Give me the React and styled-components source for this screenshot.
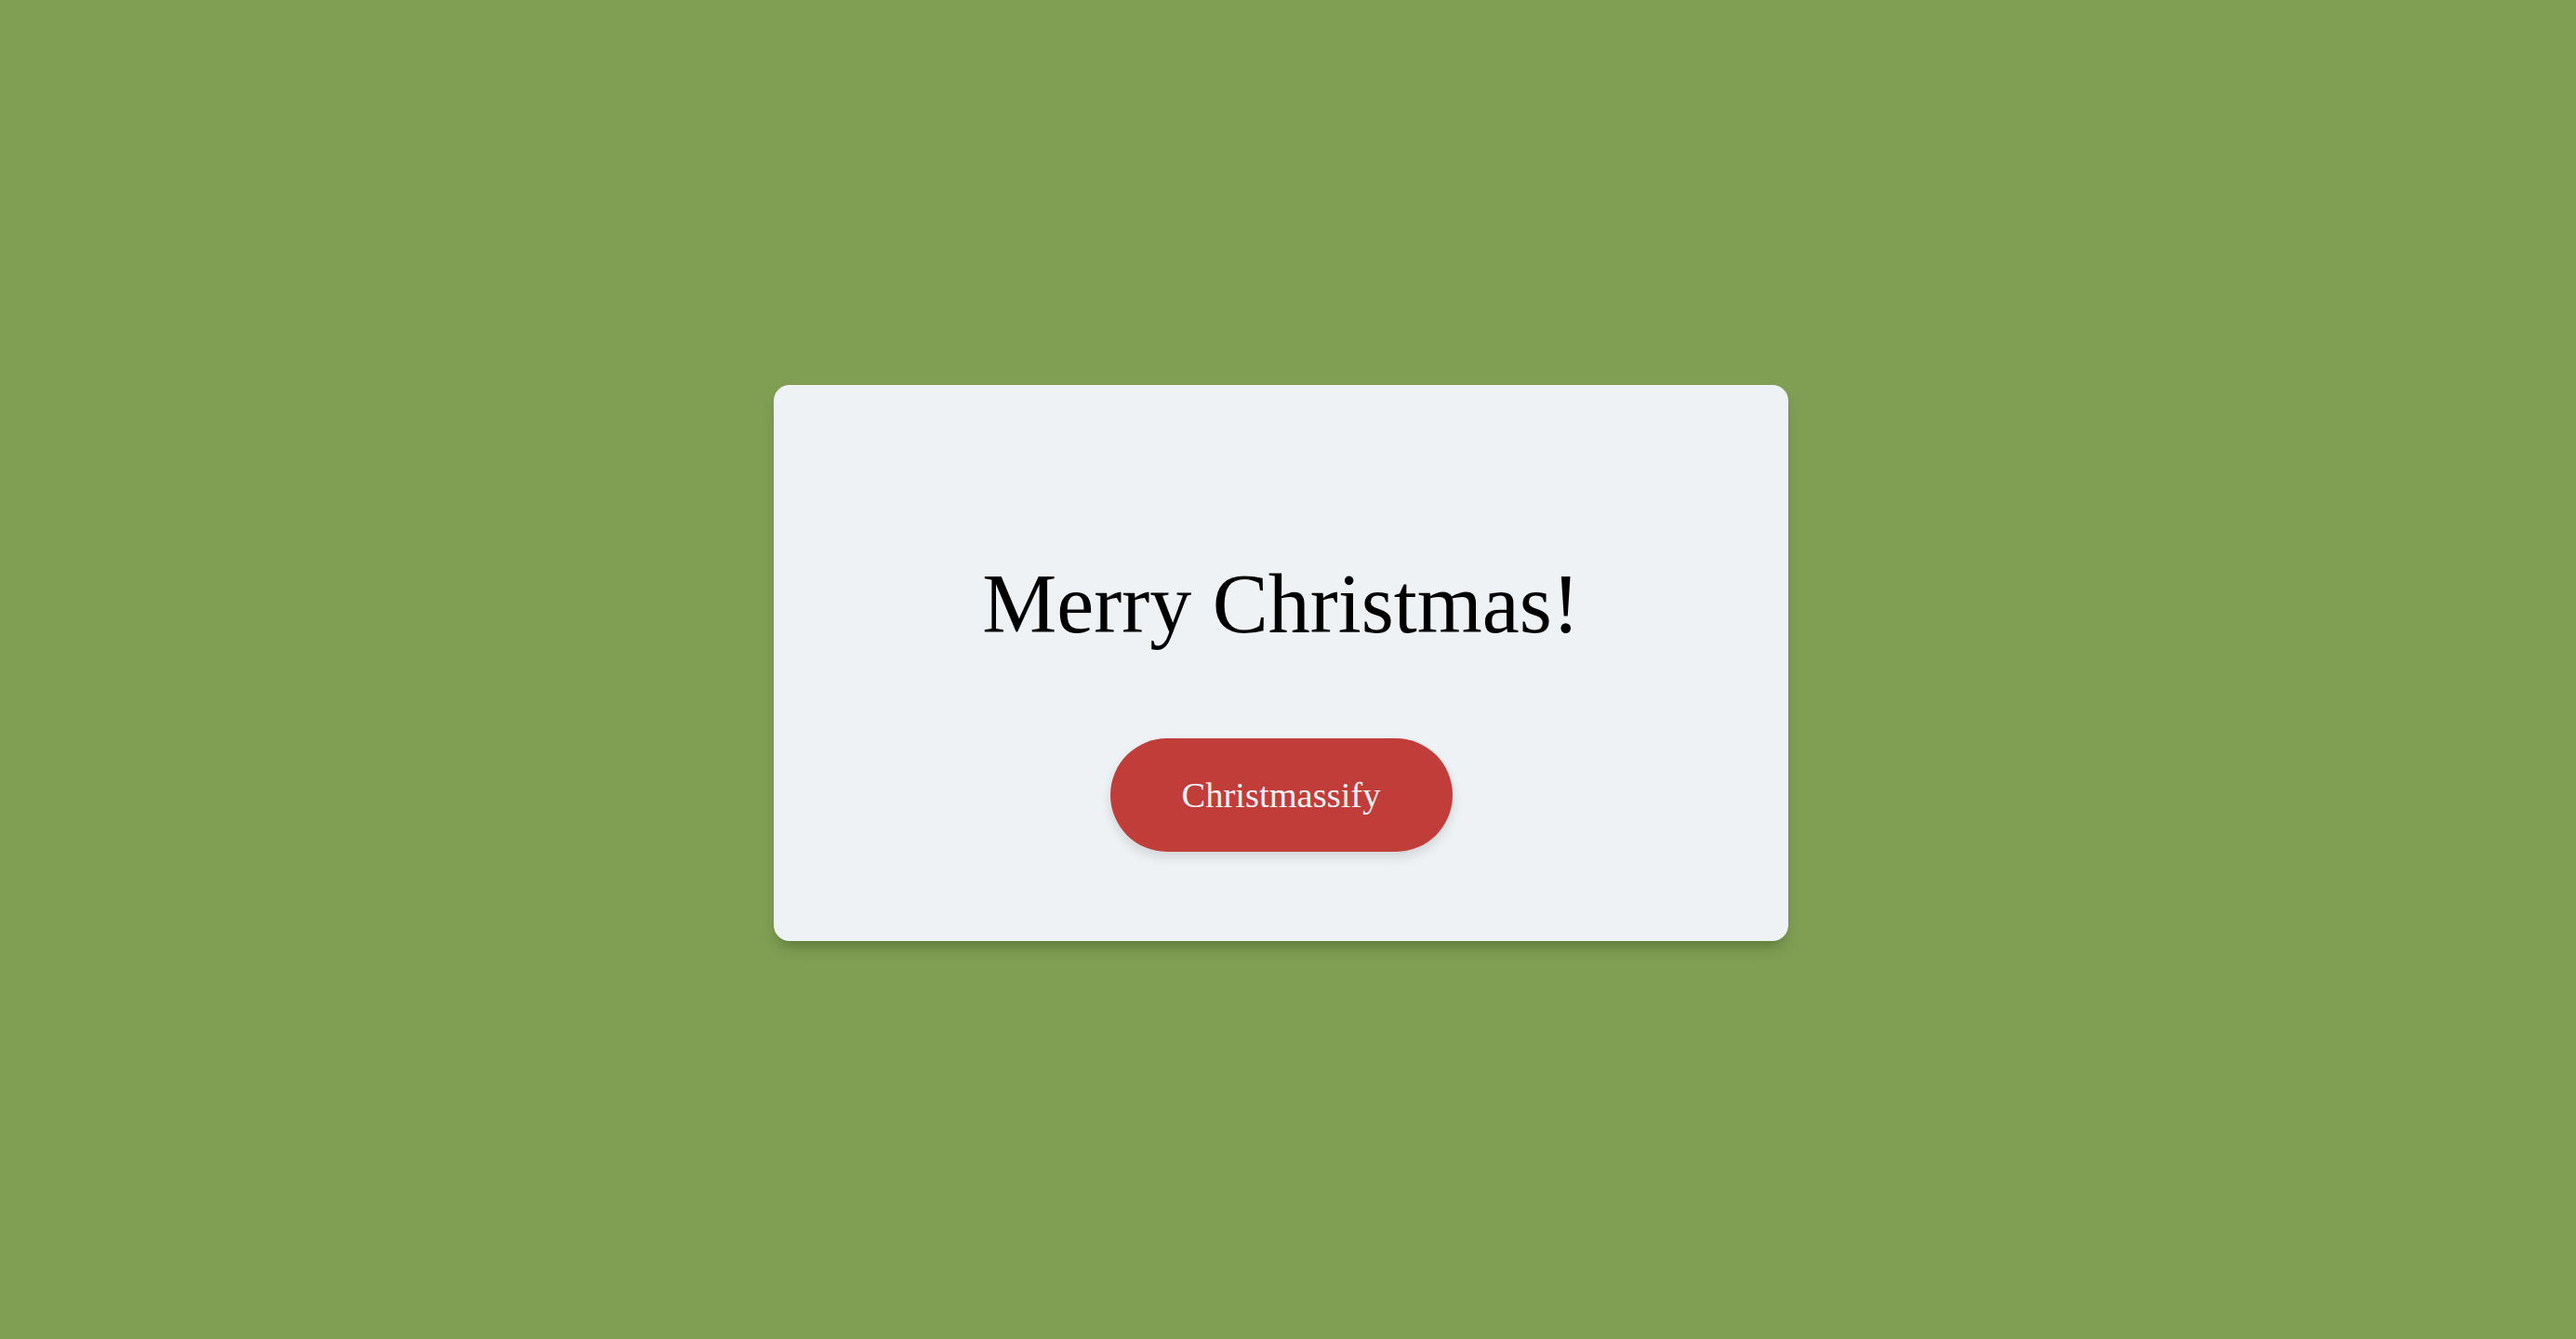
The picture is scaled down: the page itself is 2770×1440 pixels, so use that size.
import React from "react";
import styled, { createGlobalStyle } from "styled-components";

const GlobalStyle = createGlobalStyle`
  html, body {
    margin: 0;
    padding: 0;
    background: #809f53;
  }
  body {
    font-family: "Liberation Serif", "Times New Roman", serif;
  }
`;

const Page = styled.main`
  box-sizing: border-box;
  min-height: 100vh;
  display: flex;
  align-items: center;
  justify-content: center;
  padding: 0 15px 14px 0;
  background: #809f53;
`;

const Card = styled.section`
  box-sizing: border-box;
  width: 1091px;
  height: 598px;
  padding: 186px 0 0;
  display: flex;
  flex-direction: column;
  align-items: center;
  gap: 94px;
  background: #eff2f5;
  border-radius: 17px;
  box-shadow: 0 10px 16px -6px rgba(30, 45, 15, 0.4);
`;

const Title = styled.h1`
  margin: 0;
  font-family: "Liberation Serif", "Times New Roman", serif;
  font-weight: 400;
  font-size: 90px;
  line-height: 100px;
  color: #000;
`;

const Button = styled.button`
  box-sizing: border-box;
  height: 122px;
  width: 368px;
  padding: 0;
  border: none;
  border-radius: 61px;
  background: #c13d3a;
  color: #f1f3f6;
  font-family: "Liberation Serif", "Times New Roman", serif;
  font-size: 38.5px;
  line-height: 46px;
  cursor: pointer;
  box-shadow: 0 6px 12px rgba(0, 0, 0, 0.12);
`;

export default function App() {
  return (
    <>
      <GlobalStyle />
      <Page>
        <Card>
          <Title>Merry Christmas!</Title>
          <Button>Christmassify</Button>
        </Card>
      </Page>
    </>
  );
}
